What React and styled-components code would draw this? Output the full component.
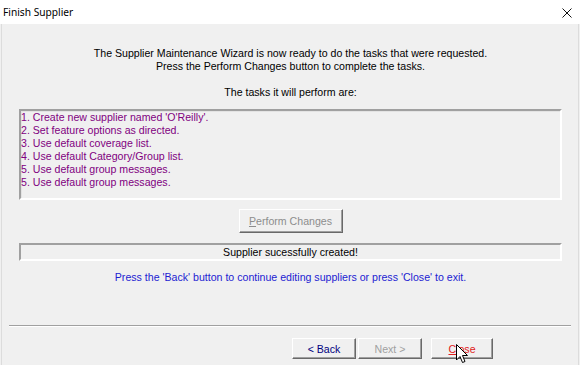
import React from 'react';
import styled, { createGlobalStyle } from 'styled-components';

const GlobalStyle = createGlobalStyle`
    html, body {
        margin: 0;
        padding: 0;
        background: #f0f0f0;
    }
`;

const Window = styled.div`
    width: 580px;
    height: 365px;
    display: flex;
    flex-direction: column;
    background: #f0f0f0;
    font-family: "Liberation Sans", Arial, sans-serif;
    font-size: 10.6px;
    overflow: hidden;
    position: relative;
`;

const TitleBar = styled.div`
    height: 24px;
    flex: none;
    display: flex;
    align-items: center;
    justify-content: space-between;
    background: #ffffff;
    padding: 0 8px 0 3px;
`;

const Title = styled.span`
    font-family: "Noto Sans", "Open Sans", sans-serif;
    font-size: 10.2px;
    color: #000;
`;

const CloseIcon = styled.svg`
    width: 10px;
    height: 10px;
    margin-top: 1px;
`;

const Body = styled.div`
    flex: 1;
    display: flex;
    flex-direction: column;
    padding: 23px 16px 0 17px;
    border-left: 1px solid #dcdcdc;
    border-right: 1px solid #dcdcdc;
    margin: 0 1px;
`;

const Intro = styled.p`
    margin: 0;
    text-align: center;
    line-height: 13px;
    color: #000;
    margin-top: ${(p) => p.gap || 0}px;
`;

const TaskList = styled.ul`
    list-style: none;
    margin: 10px 0 0;
    padding: 0;
    height: 87px;
    border: 2px solid;
    border-color: #a0a0a0 #ffffff #ffffff #a0a0a0;
    box-shadow: inset 1px 1px 0 #e3e3e3;
`;

const Task = styled.li`
    line-height: 13px;
    color: #800080;
`;

const Center = styled.div`
    display: flex;
    justify-content: center;
    margin-top: ${(p) => p.gap || 0}px;
`;

const WinButton = styled.button`
    width: ${(p) => p.w}px;
    height: ${(p) => p.h}px;
    padding: 0;
    background: #f0f0f0;
    border: 1px solid;
    border-color: #ffffff #696969 #696969 #ffffff;
    box-shadow: inset -1px -1px 0 #a0a0a0;
    font-family: "Liberation Sans", Arial, sans-serif;
    font-size: 10.6px;
    color: ${(p) => p.color || '#000'};
    cursor: default;
`;

const Mnemonic = styled.span`
    text-decoration: underline;
`;

const Status = styled.div`
    margin-top: 10px;
    height: 14px;
    border: 2px solid;
    border-color: #a0a0a0 #ffffff #ffffff #a0a0a0;
    text-align: center;
    line-height: 15px;
    color: #000;
`;

const Hint = styled.p`
    margin: 10px 0 0;
    text-align: center;
    line-height: 13px;
    color: #1c1cd2;
`;

const Separator = styled.hr`
    margin: 41px -9px 0 -10px;
    height: 0;
    border: none;
    border-top: 1px solid #a0a0a0;
    border-bottom: 1px solid #ffffff;
`;

const ButtonRow = styled.div`
    display: flex;
    justify-content: flex-end;
    margin-top: 11px;
    padding-right: 69px;
    position: relative;
`;

const NavGroup = styled.div`
    display: flex;
    gap: 2px;
    margin-right: 9px;
`;

const Cursor = styled.svg`
    position: absolute;
    left: 437px;
    top: 6px;
    width: 13px;
    height: 20px;
`;

const tasks = [
    "1. Create new supplier named 'O'Reilly'.",
    '2. Set feature options as directed.',
    '3. Use default coverage list.',
    '4. Use default Category/Group list.',
    '5. Use default group messages.',
    '5. Use default group messages.',
];

const App = () => {
    return (
        <>
            <GlobalStyle />
            <Window>
                <TitleBar>
                    <Title>Finish Supplier</Title>
                    <CloseIcon viewBox="0 0 10 10">
                        <path d="M0.5 0.5 L9.5 9.5 M9.5 0.5 L0.5 9.5" stroke="#111" strokeWidth="1" fill="none" />
                    </CloseIcon>
                </TitleBar>
                <Body>
                    <Intro>
                        The Supplier Maintenance Wizard is now ready to do the tasks that were requested.
                        <br />
                        Press the Perform Changes button to complete the tasks.
                    </Intro>
                    <Intro gap={13}>The tasks it will perform are:</Intro>
                    <TaskList>
                        {tasks.map((task, i) => (
                            <Task key={i}>{task}</Task>
                        ))}
                    </TaskList>
                    <Center gap={9}>
                        <WinButton w={104} h={24} color="#8d8d8d" disabled>
                            <Mnemonic>P</Mnemonic>erform Changes
                        </WinButton>
                    </Center>
                    <Status>Supplier sucessfully created!</Status>
                    <Hint>Press the 'Back' button to continue editing suppliers or press 'Close' to exit.</Hint>
                    <Separator />
                    <ButtonRow>
                        <NavGroup>
                            <WinButton w={64} h={21} color="#000080">&lt; Back</WinButton>
                            <WinButton w={64} h={21} color="#a0a0a0" disabled>Next &gt;</WinButton>
                        </NavGroup>
                        <WinButton w={62} h={21} color="#e02020">
                            <Mnemonic>C</Mnemonic>lose
                        </WinButton>
                        <Cursor viewBox="0 0 13 20">
                            <path d="M0.5 0.5 L0.5 16 L4 12.5 L6.5 18.5 L9 17.5 L6.5 11.5 L11.5 11.5 Z" fill="#fff" stroke="#000" strokeWidth="1" strokeLinejoin="miter" />
                        </Cursor>
                    </ButtonRow>
                </Body>
            </Window>
        </>
    );
};

export default App;
